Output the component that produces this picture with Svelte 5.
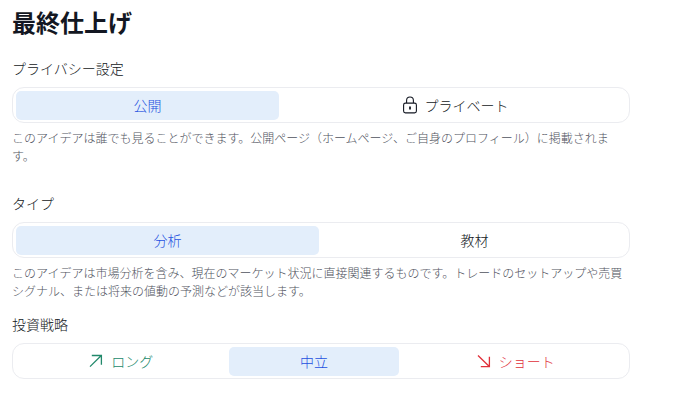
<script>
  const groups = [
    {
      id: 'privacy',
      label: 'プライバシー設定',
      hint: 'このアイデアは誰でも見ることができます。公開ページ（ホームページ、ご自身のプロフィール）に掲載されます。',
      options: [
        { value: 'public', text: '公開' },
        { value: 'private', text: 'プライベート', icon: 'lock' }
      ]
    },
    {
      id: 'type',
      label: 'タイプ',
      hint: 'このアイデアは市場分析を含み、現在のマーケット状況に直接関連するものです。トレードのセットアップや売買シグナル、または将来の値動の予測などが該当します。',
      options: [
        { value: 'analysis', text: '分析' },
        { value: 'education', text: '教材' }
      ]
    },
    {
      id: 'strategy',
      label: '投資戦略',
      options: [
        { value: 'long', text: 'ロング', icon: 'up' },
        { value: 'neutral', text: '中立' },
        { value: 'short', text: 'ショート', icon: 'down' }
      ]
    }
  ];

  let selected = $state({ privacy: 'public', type: 'analysis', strategy: 'neutral' });
</script>

<main class="publish">
  <h1>最終仕上げ</h1>

  {#each groups as group}
    <section class="group {group.id}">
      <h2 id="{group.id}-label">{group.label}</h2>
      <div class="segments" role="radiogroup" aria-labelledby="{group.id}-label">
        {#each group.options as option}
          <label class="segment {option.value}" class:active={selected[group.id] === option.value}>
            <input type="radio" name={group.id} value={option.value} bind:group={selected[group.id]} />
            {#if option.icon === 'lock'}
              <svg width="14" height="18" viewBox="0 0 14 18" fill="none" stroke="currentColor" aria-hidden="true">
                <rect x="0.6" y="7.1" width="12.8" height="9.8" rx="1.8" stroke-width="1.1" />
                <path d="M3.6 7V4.4a3.4 3.4 0 0 1 6.8 0V7" stroke-width="1.1" />
                <path d="M7 10.6v2.8" stroke-width="1.8" />
              </svg>
            {:else if option.icon === 'up'}
              <svg width="14" height="14" viewBox="0 0 14 14" fill="none" stroke="currentColor" stroke-width="1.3" aria-hidden="true">
                <path d="M1 12.6L12.3 1.5M2.8 1.5h9.6v9.2" />
              </svg>
            {:else if option.icon === 'down'}
              <svg width="14" height="14" viewBox="0 0 14 14" fill="none" stroke="currentColor" stroke-width="1.3" aria-hidden="true">
                <path d="M1 1.5l11.3 11M12.4 2.8v9.8H3.8" />
              </svg>
            {/if}
            <span>{option.text}</span>
          </label>
        {/each}
      </div>
      {#if group.hint}
        <p>{group.hint}</p>
      {/if}
    </section>
  {/each}
</main>

<style>
  :global(body) { margin: 0; background: #fff; }

  .publish {
    padding: 6px 50px 20px 12px;
    font-family: "Noto Sans CJK JP", sans-serif;
    color: #131722;
  }

  h1 { margin: 0 0 20px; font-size: 24px; line-height: 32px; font-weight: 700; }
  h2 { margin: 0 0 9px; font-size: 14px; line-height: 20px; font-weight: 300; }
  p { margin: 6px 0 0; font-size: 12px; line-height: 18px; font-weight: 300; color: #50535e; }

  .group.privacy { margin-bottom: 28px; }
  .group.type { margin-bottom: 14px; }

  .segments {
    display: flex;
    gap: 4px;
    padding: 3px 3px 2px;
    border: 1px solid #ebecf0;
    border-radius: 12px;
  }

  /* each option grows from its own text width */
  .segment {
    position: relative;
    flex: 1 1 auto;
    display: flex;
    align-items: center;
    justify-content: center;
    gap: 8px;
    box-sizing: border-box;
    height: 29px;
    padding-bottom: 2px;
    border-radius: 5px;
    font-size: 14px;
    line-height: 20px;
    font-weight: 300;
    cursor: pointer;
  }
  .segment input { position: absolute; inset: 0; margin: 0; opacity: 0; cursor: pointer; }
  .segment:has(input:focus-visible) { outline: 2px solid #2962ff; }
  .segment svg { flex: none; display: block; margin-left: 2px; }

  .segment.long { color: #22896b; }
  .segment.short { color: #e0303a; }
  .segment.active { background: #e3eefb; color: #2450e0; }
</style>
